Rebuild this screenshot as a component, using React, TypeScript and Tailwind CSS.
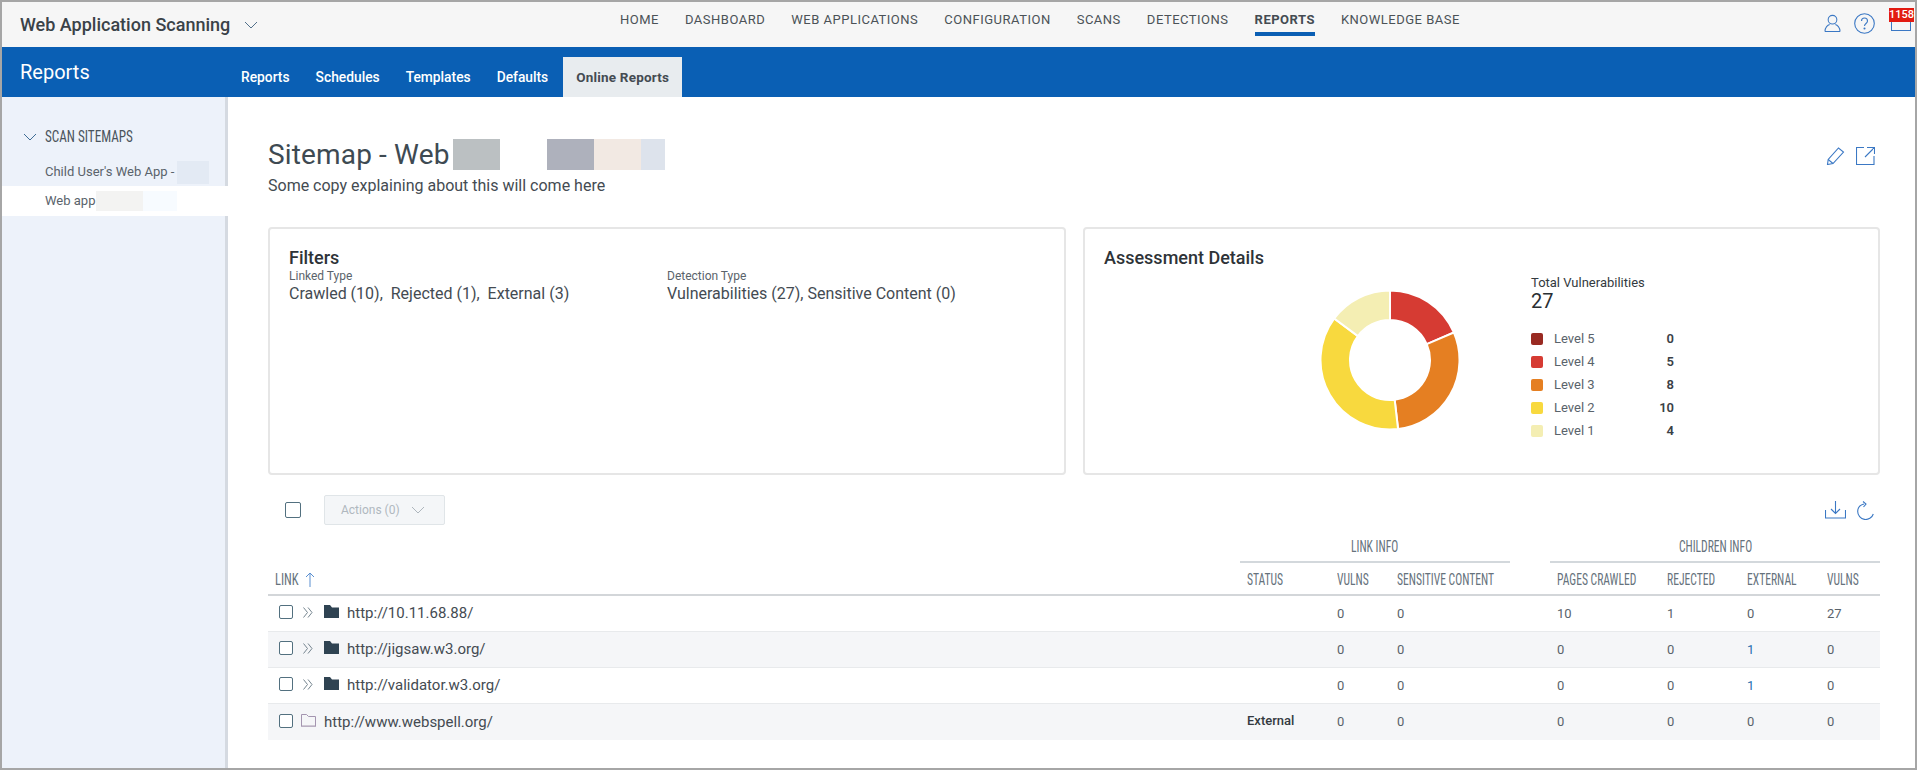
import React from "react";

const blue = "#3b78c4";

function Cond({ children, className = "scale-x-[0.725] origin-left" }: { children: React.ReactNode; className?: string }) {
  return <span className={"inline-block whitespace-nowrap text-[16px] [font-stretch:75%] " + className}>{children}</span>;
}

function polar(r: number, deg: number) {
  const a = ((deg - 90) * Math.PI) / 180;
  return [70 + r * Math.cos(a), 70 + r * Math.sin(a)];
}

function Donut() {
  const slices = [
    { v: 5, c: "#d63b33" },
    { v: 8, c: "#e57f22" },
    { v: 10, c: "#f8d93e" },
    { v: 4, c: "#f4eeb3" },
  ];
  let start = 0;
  return (
    <svg width="140" height="140" viewBox="0 0 140 140" className="block">
      {slices.map((s) => {
        const end = start + (s.v / 27) * 360;
        const [x1, y1] = polar(69.5, start);
        const [x2, y2] = polar(69.5, end);
        const [x3, y3] = polar(40, end);
        const [x4, y4] = polar(40, start);
        const large = end - start > 180 ? 1 : 0;
        const d = `M${x1} ${y1}A69.5 69.5 0 ${large} 1 ${x2} ${y2}L${x3} ${y3}A40 40 0 ${large} 0 ${x4} ${y4}Z`;
        start = end;
        return <path key={s.c} d={d} fill={s.c} stroke="#fff" strokeWidth="2" />;
      })}
    </svg>
  );
}

function Chevron({ className = "", color = blue }: { className?: string; color?: string }) {
  return (
    <svg viewBox="0 0 14 8" width="14" height="8" className={className} fill="none" stroke={color} strokeWidth="1">
      <path d="M1 1l6 6 6-6" />
    </svg>
  );
}

function Checkbox({ big }: { big?: boolean }) {
  return (
    <span
      className={
        big
          ? "block w-4 h-4 border border-[#52707f] rounded-[2px] bg-white"
          : "block w-[14px] h-[14px] border border-[#52707f] rounded-[2px] bg-white"
      }
    />
  );
}

function FolderFilled() {
  return (
    <svg width="15" height="14" viewBox="0 0 15 14" className="block">
      <path d="M0 0h6l2 2.5h7V13H0z" fill="#2f4352" />
    </svg>
  );
}

function FolderOpen() {
  return (
    <svg width="15" height="13" viewBox="0 0 15 13" className="block" fill="none">
      <path d="M.5.5h5l2 2h7v10H.5z" stroke="#a495b0" />
      <path d="M1 11h13v1.5H1z" fill="#cfc8d4" />
    </svg>
  );
}

function DoubleChevron() {
  return (
    <svg width="10" height="11" viewBox="0 0 10 11" className="block" fill="none" stroke="#76858f">
      <path d="M.5.5l4 5-4 5M5 .5l4 5-4 5" />
    </svg>
  );
}

const navItems = ["HOME", "DASHBOARD", "WEB APPLICATIONS", "CONFIGURATION", "SCANS", "DETECTIONS", "REPORTS", "KNOWLEDGE BASE"];
const tabs = ["Reports", "Schedules", "Templates", "Defaults"];
const gridCols = "grid-cols-[972px_90px_60px_160px_110px_80px_80px_60px]";

const rows = [
  { link: "http://10.11.68.88/", status: "", c: ["0", "0", "10", "1", "0", "27"], folder: true },
  { link: "http://jigsaw.w3.org/", status: "", c: ["0", "0", "0", "0", "1", "0"], folder: true },
  { link: "http://validator.w3.org/", status: "", c: ["0", "0", "0", "0", "1", "0"], folder: true },
  { link: "http://www.webspell.org/", status: "External", c: ["0", "0", "0", "0", "0", "0"], folder: false },
];

const legend = [
  { l: "Level 5", v: 0, c: "bg-[#992a22]" },
  { l: "Level 4", v: 5, c: "bg-[#d63b33]" },
  { l: "Level 3", v: 8, c: "bg-[#e57f22]" },
  { l: "Level 2", v: 10, c: "bg-[#f8d93e]" },
  { l: "Level 1", v: 4, c: "bg-[#f4eeb3]" },
];

export default function App() {
  return (
    <div className="w-[1917px] h-[770px] overflow-hidden border-2 border-[#a6a6a6] bg-white [font-family:Roboto,sans-serif] text-[#444b52] flex flex-col">
      {/* top nav */}
      <header className="h-[45px] shrink-0 bg-[#f6f6f6] flex items-start">
        <div className="w-[618px] pl-[18px] h-full flex items-center gap-[14px] shrink-0">
          <span className="text-[18px] leading-none font-medium text-[#3a4248] whitespace-nowrap">Web Application Scanning</span>
          <Chevron color="#52708a" />
        </div>
        <nav className="flex gap-[26px] text-[13px] tracking-[0.5px] text-[#4b5257]">
          {navItems.map((n) => (
            <div
              key={n}
              className={
                n === "REPORTS"
                  ? "h-[34px] pt-[10px] leading-4 font-bold border-b-4 border-[#0a5fb4] text-[#444b52] whitespace-nowrap"
                  : "h-[34px] pt-[10px] leading-4 whitespace-nowrap"
              }
            >
              {n}
            </div>
          ))}
        </nav>
        <div className="ml-auto flex items-start">
          <svg width="17" height="19" viewBox="0 0 18 20" className="mt-[12px] mr-[13px]" fill="none" stroke={blue} strokeWidth="1.1">
            <circle cx="9" cy="6" r="4.6" />
            <path d="M1 18.5c0-4.5 3-7 5-7.5M17 18.5c0-4.5-3-7-5-7.5M1 18.5h16" />
          </svg>
          <svg width="21" height="21" viewBox="0 0 21 21" className="mt-[11px] mr-[14px]" fill="none" stroke={blue} strokeWidth="1.1">
            <circle cx="10.5" cy="10.5" r="9.8" />
            <path d="M7.5 8c0-4 6-4 6 0 0 2.5-3 2.5-3 5" />
            <circle cx="10.5" cy="15.5" r=".5" />
          </svg>
          <div className="relative w-[26px] h-[45px]">
            <div className="absolute left-[2px] top-[12px] w-[20px] h-[17px] border border-[#3b78c4] bg-[#f6f6f6]" />
            <div className="absolute left-0 top-[6px] w-[25px] h-[14px] bg-[#e21b12] text-white text-[11px] leading-[14px] font-medium text-center">1158</div>
          </div>
        </div>
      </header>

      {/* blue bar */}
      <div className="h-[50px] shrink-0 bg-[#0a5fb4] flex text-white">
        <div className="w-[239px] pl-[18px] pt-[11px] text-[20px] leading-7 shrink-0">Reports</div>
        <div className="flex items-end text-[13.8px] font-medium">
          {tabs.map((t) => (
            <div key={t} className="h-[40px] leading-[40px] pr-[26px] whitespace-nowrap">{t}</div>
          ))}
          <div className="h-[40px] leading-[40px] w-[119px] text-center bg-[#e8ecef] text-[13.5px] text-[#444b52] font-bold whitespace-nowrap -ml-[11px] tracking-[0.2px]">Online Reports</div>
        </div>
      </div>

      <div className="flex-1 flex min-h-0">
        {/* sidebar */}
        <aside className="w-[226px] shrink-0 bg-[#edf2fa] pt-[30px] border-r-[3px] border-[#d5dae1] relative">
          <div className="h-[20px] flex items-center pl-[21px] gap-[8px]">
            <Chevron color="#3f6d96" />
            <Cond className="scale-x-[0.82] origin-left leading-5 text-[#4a545c]">SCAN SITEMAPS</Cond>
          </div>
          <div className="mt-[13px] h-[24px] flex items-center pl-[43px] text-[13px] text-[#5a636b] whitespace-nowrap">
            <span>Child User's Web App -</span>
            <span className="ml-[3px] w-[32px] h-[23px] bg-[#e3eaf4]" />
          </div>
          <div className="mt-[2px] h-[30px] w-[226px] bg-white flex items-center pl-[43px] text-[13px] text-[#5a636b] whitespace-nowrap">
            <span>Web app</span>
            <span className="ml-[1px] w-[47px] h-[20px] bg-[#f3f3f2]" />
            <span className="w-[34px] h-[20px] bg-[#f7fbff]" />
          </div>
        </aside>

        {/* main */}
        <main className="flex-1 min-w-0 pl-[40px] pr-[35px]">
          <div className="flex items-start justify-between pt-[42px] h-[130px]">
            <div>
              <div className="flex items-center h-[31px]">
                <span className="w-[185px] text-[28px] tracking-[0.15px] leading-none text-[#3e4a52] whitespace-nowrap">Sitemap - Web</span>
                <span className="w-[47px] h-[31px] bg-[#bbc0c2]" />
                <span className="ml-[47px] w-[47px] h-[31px] bg-[#aeb1bc]" />
                <span className="w-[47px] h-[31px] bg-[#f2e9e3]" />
                <span className="w-[24px] h-[31px] bg-[#dde3ec]" />
              </div>
              <p className="mt-[6px] text-[16px] leading-5 text-[#444b52]">Some copy explaining about this will come here</p>
            </div>
            <div className="flex gap-[11px] mt-[8px] pr-[5px]">
              <svg width="19" height="18" viewBox="0 0 19 18" fill="none" stroke={blue} strokeWidth="1.1">
                <path d="M1.5 17.5l.7-5L12.5 1l5 4L7 16.5z" />
                <path d="M2.2 12.5L7 16.5" />
              </svg>
              <svg width="19" height="18" viewBox="0 0 19 18" fill="none" stroke={blue} strokeWidth="1.1">
                <path d="M8 .5H.5v17h17.5V9M11 .5h7.5V7M18 1L9 10" />
              </svg>
            </div>
          </div>

          {/* cards */}
          <div className="flex gap-[17px]">
            <section className="w-[798px] h-[248px] shrink-0 border-2 border-[#e6e6e6] rounded-[4px] pl-[19px] pt-[17px]">
              <h2 className="text-[18px] leading-6 font-medium text-[#2e3338]">Filters</h2>
              <div className="flex">
                <div className="w-[378px]">
                  <div className="text-[12px] leading-[12px] text-[#5a636b]">Linked Type</div>
                  <div className="mt-[2px] text-[16px] leading-5 text-[#444b52] whitespace-pre">Crawled (10),  Rejected (1),  External (3)</div>
                </div>
                <div>
                  <div className="text-[12px] leading-[12px] text-[#5a636b]">Detection Type</div>
                  <div className="mt-[2px] text-[16px] leading-5 text-[#444b52] whitespace-nowrap">Vulnerabilities (27), Sensitive Content (0)</div>
                </div>
              </div>
            </section>
            <section className="flex-1 h-[248px] border-2 border-[#e6e6e6] rounded-[4px] pl-[19px] pt-[17px] flex">
              <h2 className="w-[216px] text-[18px] leading-6 font-medium text-[#2e3338] whitespace-nowrap shrink-0">Assessment Details</h2>
              <div className="mt-[44px] shrink-0"><Donut /></div>
              <div className="ml-[71px] mt-[29px] w-[143px]">
                <div className="text-[13px] leading-4 text-[#333a40] whitespace-nowrap">Total Vulnerabilities</div>
                <div className="text-[20px] leading-6 text-[#2a2f33] -mt-[2px]">27</div>
                <div className="mt-[14px] flex flex-col">
                  {legend.map((it) => (
                    <div key={it.l} className="h-[23px] flex items-center text-[13px]">
                      <span className={"w-[12px] h-[12px] rounded-[2px] " + it.c} />
                      <span className="ml-[11px] text-[#5a636b]">{it.l}</span>
                      <span className="ml-auto font-semibold text-[#3a4046]">{it.v}</span>
                    </div>
                  ))}
                </div>
              </div>
            </section>
          </div>

          {/* toolbar */}
          <div className="h-[30px] mt-[20px] flex items-center pl-[17px]">
            <Checkbox big />
            <button className="ml-[23px] w-[121px] h-[30px] bg-[#f4f6f8] border border-[#e0e5e8] rounded-[2px] flex items-center pl-[16px] text-[12px] text-[#b0b8bf]">
              Actions (0)
              <Chevron className="ml-[11px]" color="#aeb6bd" />
            </button>
            <div className="ml-auto flex items-center gap-[11px] pr-[6px]">
              <svg width="21" height="18" viewBox="0 0 21 18" fill="none" stroke={blue} strokeWidth="1.1">
                <path d="M.5 9v8h20V9M10.5 0v12M6 8l4.5 4.5L15 8" />
              </svg>
              <svg width="17" height="19" viewBox="0 0 17 19" fill="none" stroke={blue} strokeWidth="1.1">
                <path d="M7 3C3 4 .7 7 .7 10.5a8 8 0 0 0 15.6 2.5" />
                <path d="M6 .5L9 3 6.5 6" />
              </svg>
            </div>
          </div>

          {/* table */}
          <div className="w-[1612px] mt-[8px]">
            <div className={"grid h-[30px] text-[#66727c] " + gridCols}>
              <div className="col-span-1" />
              <div className="col-span-3 w-[270px] h-[30px] border-b-2 border-[#d3d8dc] text-center leading-[28px]"><Cond className="scale-x-[0.725] origin-center">LINK INFO</Cond></div>
              <div className="col-span-4 h-[30px] border-b-2 border-[#d3d8dc] text-center leading-[28px]"><Cond className="scale-x-[0.725] origin-center">CHILDREN INFO</Cond></div>
            </div>
            <div className={"grid h-[33px] pt-[2px] items-center text-[#66727c] border-b-2 border-[#d3d6d9] " + gridCols}>
              <div className="pl-[7px] flex items-center">
                <div className="w-[30px]"><Cond className="scale-x-[0.78] origin-left">LINK</Cond></div>
                <svg width="10" height="15" viewBox="0 0 10 15" fill="none" stroke="#5a8fd0"><path d="M5 15V1M1 5l4-4 4 4" /></svg>
              </div>
              {["STATUS", "VULNS", "SENSITIVE CONTENT", "PAGES CRAWLED", "REJECTED", "EXTERNAL", "VULNS"].map((h, i) => (
                <div key={i} className="pl-[7px]"><Cond>{h}</Cond></div>
              ))}
            </div>
            {rows.map((r, i) => (
              <div key={r.link} className={"grid h-[36px] items-center text-[13px] border-b border-[#e8eaec] last:border-b-0 " + gridCols + (i % 2 ? " bg-[#f5f6f8]" : " bg-white")}>
                <div className="pl-[11px] flex items-center text-[15px] text-[#444b52]">
                  <div className="-mt-[3px]"><Checkbox /></div>
                  {r.folder ? (
                    <>
                      <div className="ml-[10px] -mt-[3px]"><DoubleChevron /></div>
                      <div className="ml-[11px] -mt-[3px]"><FolderFilled /></div>
                      <span className="ml-[8px]">{r.link}</span>
                    </>
                  ) : (
                    <>
                      <div className="ml-[8px] -mt-[3px]"><FolderOpen /></div>
                      <span className="ml-[8px]">{r.link}</span>
                    </>
                  )}
                </div>
                <div className="pl-[7px] font-medium text-[#333a40] -mt-[3px]">{r.status}</div>
                {r.c.map((v, j) => (
                  <div key={j} className={"pl-[7px] " + (j === 4 && v === "1" ? "text-[#2a6fb0]" : "text-[#5a636b]")}>{v}</div>
                ))}
              </div>
            ))}
          </div>
        </main>
      </div>
    </div>
  );
}
